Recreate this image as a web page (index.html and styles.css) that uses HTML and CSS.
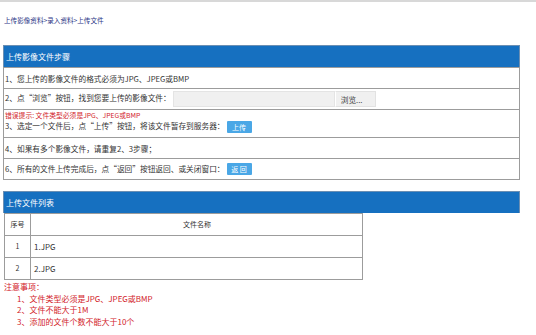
FILE: index.html
```html
<!DOCTYPE html>
<html lang="zh-CN">
<head>
  <meta charset="UTF-8">
  <title>上传文件</title>
  <link rel="stylesheet" href="styles.css">
</head>
<body>

  <div class="topline"></div>
  <div class="crumb">上传影像资料&gt;录入资料&gt;上传文件</div>

  <div class="panel">
    <div class="panel-head">上传影像文件步骤</div>
    <table class="steps">
      <tr><td>1、您上传的影像文件的格式必须为JPG、JPEG或BMP</td></tr>
      <tr>
        <td>
          2、点“浏览”按钮，找到您要上传的影像文件：<span class="file"><span class="file-box"></span><span class="file-btn">浏览...</span></span>
        </td>
      </tr>
      <tr class="tall">
        <td>
          <div class="err">错误提示: 文件类型必须是JPG、JPEG或BMP</div>
          3、选定一个文件后，点“上传”按钮，将该文件暂存到服务器：<span class="btn">上传</span>
        </td>
      </tr>
      <tr><td>4、如果有多个影像文件，请重复2、3步骤；</td></tr>
      <tr><td>6、所有的文件上传完成后，点“返回”按钮返回、或关闭窗口：<span class="btn">返 回</span></td></tr>
    </table>
  </div>

  <div class="panel list">
    <div class="panel-head">上传文件列表</div>
    <table class="files">
      <tr><th class="no">序号</th><th>文件名称</th></tr>
      <tr><td class="no">1</td><td>1.JPG</td></tr>
      <tr><td class="no">2</td><td>2.JPG</td></tr>
    </table>
  </div>

  <div class="notes">
    <div class="notes-title">注意事项：</div>
    <ol>
      <li>1、文件类型必须是JPG、JPEG或BMP</li>
      <li>2、文件不能大于1M</li>
      <li>3、添加的文件个数不能大于10个</li>
    </ol>
  </div>

</body>
</html>
```

FILE: styles.css
```css
body {
  margin: 0;
  padding: 0 3px;
  font-family: "Noto Sans CJK SC", "Liberation Sans", sans-serif;
  font-size: 8px;
  color: #333;
  background-color: #fff;
}

.topline {
  height: 2px;
  margin: 0 -3px;
  background-color: #d8d8d8;
}

.crumb {
  margin-top: 14px;
  padding-left: 1px;
  font-size: 6.6px;
  line-height: 8px;
  color: #2a3585;
}

.panel {
  margin-top: 21px;
  width: 517px;
}

.panel.list {
  margin-top: 11px;
}

.panel-head {
  height: 22px;
  line-height: 22px;
  padding-left: 2px;
  background-color: #1670c0;
  color: #fff;
  border: 1px solid #6b8fb3;
  border-bottom: none;
  box-sizing: border-box;
}

table {
  border-collapse: collapse;
}

td, th {
  border: 1px solid #9c9c9c;
  padding: 0 0 0 1px;
  font-weight: normal;
  text-align: left;
  line-height: 11px;
}

.steps {
  width: 517px;
}

.steps td {
  height: 20px;
  font-size: 7.7px;
}

.steps .tall td {
  height: 27px;
  vertical-align: top;
}

.err {
  margin-top: 1px;
  font-size: 6.8px;
  line-height: 9px;
  color: #d2232a;
}

.file {
  display: inline-flex;
  vertical-align: middle;
  margin-left: 2px;
}

.file-box {
  width: 162px;
  height: 16px;
  background-color: #f0f0f0;
  border: 1px solid #e4e4e4;
  box-sizing: border-box;
}

.file-btn {
  width: 41px;
  height: 16px;
  line-height: 16px;
  padding-left: 5px;
  box-sizing: border-box;
  background-color: #f0f0f0;
  border: 1px solid #e2e2e2;
  border-left: 1px solid #fff;
  color: #444;
}

.btn {
  display: inline-block;
  width: 25px;
  height: 12px;
  line-height: 12px;
  margin-left: 2px;
  text-align: center;
  background-color: #4aa7e6;
  color: #fff;
  border-radius: 1px;
  font-size: 7px;
  vertical-align: middle;
}

.files {
  width: 359px;
  margin-left: 1px;
}

.files td, .files th {
  height: 21px;
}

.files th {
  text-align: center;
  font-size: 7px;
}

.files .no {
  width: 25px;
  text-align: center;
  font-size: 7px;
  padding: 0;
}

.files td {
  padding-left: 3px;
}

.notes {
  padding-left: 1px;
  color: #d2232a;
  font-size: 8px;
  line-height: 11.5px;
}

.notes-title {
  margin-top: 1px;
}

.notes ol {
  list-style: none;
  margin: 0;
  padding-left: 13px;
}
```
